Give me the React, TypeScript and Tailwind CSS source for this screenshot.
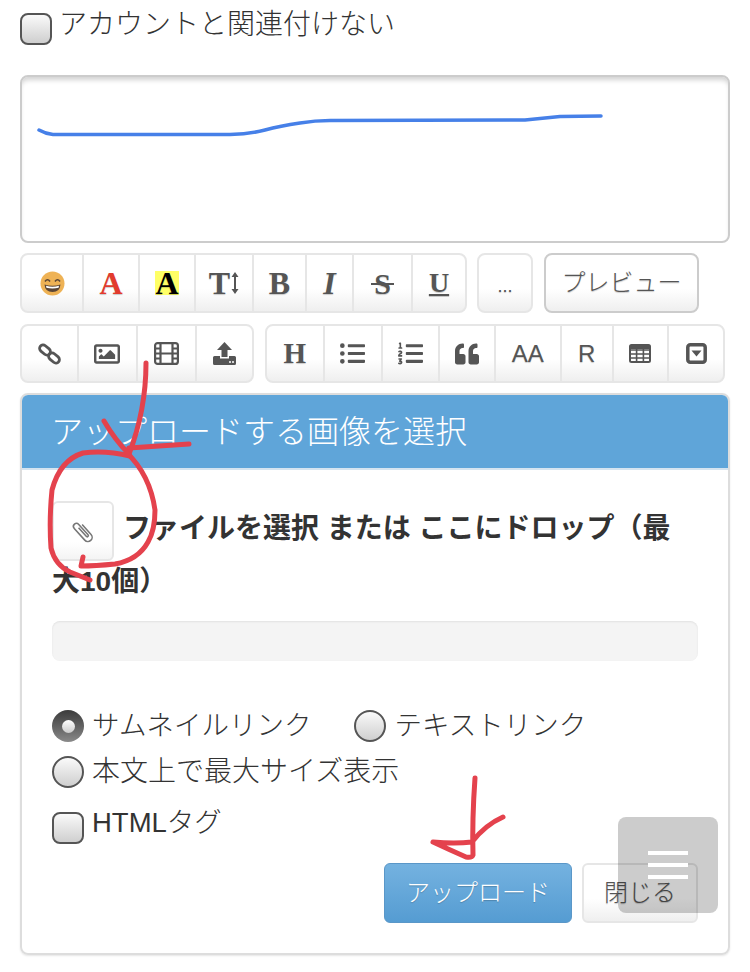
import { ReactNode } from "react"
import { FaListOl, FaListUl, FaQuoteLeft, FaRegImage } from "react-icons/fa"

const jp = "font-['Liberation_Sans','Noto_Sans_CJK_JP',sans-serif]"
const serif = "font-['Liberation_Serif','Noto_Serif',serif] font-bold"

const ToolButton = ({ className, children }: { className: string, children: ReactNode }) => (
    <div className={`flex h-full items-center justify-center border-r-2 border-[#e6e6e6] last:border-r-0 text-[#555] [text-shadow:0_1px_1px_rgba(0,0,0,0.2)] ${className}`}>
        {children}
    </div>
)

const ToolGroup = ({ className, children }: { className: string, children: ReactNode }) => (
    <div className={`flex rounded-lg border-2 border-[#e6e6e6] bg-gradient-to-b from-white from-60% to-[#efefef] ${className}`}>
        {children}
    </div>
)

const CheckBox = () => (
    <span className="block h-[32px] w-[32px] shrink-0 rounded-lg border-2 border-[#555] bg-gradient-to-b from-[#fafafa] to-[#cfcfcf]" />
)

const Radio = ({ checked }: { checked?: boolean }) => (
    checked
        ? <span className="flex h-[32px] w-[32px] shrink-0 items-center justify-center rounded-full bg-gradient-to-b from-[#3c3c3c] to-[#8a8a8a]">
            <span className="block h-[13px] w-[13px] rounded-full bg-gradient-to-b from-white to-[#ccc]" />
        </span>
        : <span className="block h-[32px] w-[32px] shrink-0 rounded-full border-2 border-[#555] bg-gradient-to-b from-[#fafafa] to-[#cfcfcf]" />
)

const Emoji = () => (
    <svg width="25" height="25" viewBox="0 0 25 25">
        <circle cx="12.5" cy="12.5" r="12" fill="#eeb255" />
        <path d="M5 10.5q2.5-3.5 5 0M15 10.5q2.500-3.500 5 0" fill="none" stroke="#5b4636" strokeWidth="1.6" />
        <path d="M4.500 13.500q8 2.500 16 0q-.5 7.500-8 7.500t-8-7.500z" fill="#5b4636" />
        <path d="M6 14.800q6.500 1.800 13 0l-.4 2q-6.100 1.500-12.200 0z" fill="#fff" />
    </svg>
)

const LinkIcon = () => (
    <svg width="23" height="22" viewBox="0 0 23 22" fill="none" stroke="#555" strokeWidth="2.800">
        <rect x="1" y="3.500" width="12" height="7" rx="3.500" transform="rotate(40 7 7)" />
        <rect x="10" y="11.500" width="12" height="7" rx="3.500" transform="rotate(40 16 15)" />
    </svg>
)

const FilmIcon = () => (
    <svg width="25" height="23" viewBox="0 0 25 23" fill="none" stroke="#555" strokeWidth="2.200">
        <rect x="1.100" y="1.100" width="22.800" height="20.800" rx="2.500" />
        <path d="M6.500 1v21M18.500 1v21M6.500 11.500h12M1 6.500h5.500M1 11.500h5.500M1 16.500h5.500M18.500 6.500h5.500M18.500 11.500h5.500M18.500 16.500h5.500" />
    </svg>
)

const UploadIcon = () => (
    <svg width="23" height="23" viewBox="0 0 23 23" fill="#555">
        <path d="M11.500 0l7.500 8h-4.500v7h-6v-7h-4.500z" />
        <path d="M1.500 14h5.500v2.500h9v-2.500h5.500a1.500 1.500 0 0 1 1.500 1.500v6a1.500 1.500 0 0 1-1.500 1.500h-20a1.500 1.500 0 0 1-1.500-1.500v-6a1.500 1.500 0 0 1 1.500-1.500z" />
        <circle cx="17" cy="20" r="1" fill="#fff" />
        <circle cx="20" cy="20" r="1" fill="#fff" />
    </svg>
)

const TableIcon = () => (
    <svg width="22" height="19" viewBox="0 0 22 19" fill="none" stroke="#555" strokeWidth="1.600">
        <rect x="1" y="1" width="20" height="17" rx="1.500" strokeWidth="2" />
        <path d="M1 6h20M1 10h20M1 14h20M7.600 5v13M14.400 5v13" />
        <path d="M1 3.500h20" strokeWidth="3" />
    </svg>
)

const SquareDown = () => (
    <svg width="21" height="21" viewBox="0 0 21 21">
        <rect x="1.800" y="1.800" width="17.400" height="17.400" rx="2.500" fill="none" stroke="#555" strokeWidth="3.500" />
        <path d="M5.500 7.500h10l-5 6z" fill="#555" />
    </svg>
)

const ClipIcon = () => (
    <svg width="27" height="29" viewBox="0 0 22 24" fill="none" stroke="#777" strokeWidth="1.300">
        <path transform="rotate(-42 11 12)" d="M14 7v11a3.500 3.500 0 0 1-7 0V5a2.500 2.500 0 0 1 5 0v11.500a1 1 0 0 1-2 0V7" />
    </svg>
)

const App = () => {
    return (
        <div className={`relative h-[972px] w-[750px] overflow-hidden bg-white text-[#333] ${jp}`}>
            <div className="px-[20px] pt-[13px]">
                <label className="flex h-[32px] items-start gap-[7px]">
                    <CheckBox />
                    <span className="-mt-[2px] text-[28px] font-light leading-[28px]">アカウントと関連付けない</span>
                </label>

                <div className="mt-[30px] h-[168px] w-[710px] rounded-lg border-2 border-[#ccc] shadow-[inset_0_5px_5px_-2px_rgba(0,0,0,0.18)]" />

                {/* ============== toolbar ============== */}
                <div className="mt-[10px] flex h-[60px] items-stretch">
                    <ToolGroup className="w-[447px]">
                        <ToolButton className="w-[62px]"><Emoji /></ToolButton>
                        <ToolButton className={`w-[56px] text-[32px] !text-[#e23b2e] ${serif}`}>A</ToolButton>
                        <ToolButton className="w-[56px]"><span className={`bg-[#ffff66] text-[32px] leading-[24px] !text-black ${serif}`}>A</span></ToolButton>
                        <ToolButton className={`w-[58px] text-[32px] ${serif}`}>
                            T
                            <svg width="8" height="22" viewBox="0 0 8 22" fill="#555" className="ml-[1px]">
                                <path d="M4 0l3.500 5h-2.500v12h2.500l-3.500 5-3.500-5h2.500v-12h-2.500z" />
                            </svg>
                        </ToolButton>
                        <ToolButton className={`w-[53px] text-[32px] ${serif}`}>B</ToolButton>
                        <ToolButton className={`w-[47px] text-[32px] italic ${serif}`}>I</ToolButton>
                        <ToolButton className={`w-[59px] text-[30px] ${serif}`}>
                            <span className="relative">
                                S
                                <span className="absolute -left-[3px] -right-[3px] top-1/2 h-[2px] bg-[#555]" />
                            </span>
                        </ToolButton>
                        <ToolButton className={`w-[52px] text-[28px] underline ${serif}`}>U</ToolButton>
                    </ToolGroup>
                    <ToolGroup className="ml-[10px] w-[56px]">
                        <ToolButton className="w-full pt-[6px] text-[18px]">...</ToolButton>
                    </ToolGroup>
                    <div className="ml-[11px] flex w-[155px] items-center justify-center rounded-lg border-2 border-[#ccc] bg-gradient-to-b from-white from-60% to-[#efefef] text-[24px] font-light text-[#555] [text-shadow:0_1px_1px_rgba(0,0,0,0.2)]">
                        プレビュー
                    </div>
                </div>

                <div className="mt-[11px] flex h-[59px] items-stretch">
                    <ToolGroup className="w-[234px]">
                        <ToolButton className="w-[57px]"><LinkIcon /></ToolButton>
                        <ToolButton className="w-[60px]"><FaRegImage size={26} /></ToolButton>
                        <ToolButton className="w-[60px]"><FilmIcon /></ToolButton>
                        <ToolButton className="w-[55px]"><UploadIcon /></ToolButton>
                    </ToolGroup>
                    <ToolGroup className="ml-[11px] w-[460px]">
                        <ToolButton className={`w-[58px] text-[29px] ${serif}`}>H</ToolButton>
                        <ToolButton className="w-[58px]"><FaListUl size={25} /></ToolButton>
                        <ToolButton className="w-[58px]"><FaListOl size={25} /></ToolButton>
                        <ToolButton className="w-[56px]"><FaQuoteLeft size={24} /></ToolButton>
                        <ToolButton className="w-[66px] text-[24px]">AA</ToolButton>
                        <ToolButton className="w-[52px] text-[24px]">R</ToolButton>
                        <ToolButton className="w-[56px]"><TableIcon /></ToolButton>
                        <ToolButton className="w-[54px]"><SquareDown /></ToolButton>
                    </ToolGroup>
                </div>

                {/* ============== upload panel ============== */}
                <div className="mt-[10px] h-[562px] w-[710px] overflow-hidden rounded-lg border-2 border-[#ddd] shadow-[0_1px_2px_rgba(0,0,0,0.1)]">
                    <div className="flex h-[75px] items-center border-b-2 border-[#d5e4f0] bg-[#5fa5d9] pl-[29px] text-[32px] font-light text-white">
                        アップロードする画像を選択
                    </div>
                    <div className="px-[30px] pt-[31px]">
                        <div className="text-[28px] font-bold leading-[42px]">
                            <span className="mr-[9px] inline-flex h-[60px] w-[62px] items-center justify-center rounded-md border-2 border-[#e6e6e6] bg-gradient-to-b from-white from-70% to-[#f4f4f4] align-middle">
                                <ClipIcon />
                            </span>
                            ファイルを選択 または ここにドロップ（最<br />大10個）
                        </div>
                        <div className="mt-[18px] h-[40px] w-[646px] rounded-lg bg-[#f4f4f4] shadow-[inset_0_1px_2px_rgba(0,0,0,0.08)]" />

                        <div className="mt-[49px] flex h-[32px] items-center text-[27.500px] font-light">
                            <Radio checked />
                            <span className="ml-[8px]">サムネイルリンク</span>
                            <span className="ml-[43px]"><Radio /></span>
                            <span className="ml-[8px]">テキストリンク</span>
                        </div>
                        <div className="mt-[14px] flex h-[32px] items-center text-[28px] font-light">
                            <Radio />
                            <span className="ml-[8px]">本文上で最大サイズ表示</span>
                        </div>
                        <div className="mt-[24px] flex h-[32px] items-start gap-[8px] text-[27.500px] font-light">
                            <CheckBox />
                            <span className="-mt-[5px] leading-[32px]">HTMLタグ</span>
                        </div>

                        <div className="mt-[19px] flex justify-end gap-[10px]">
                            <div className="flex h-[60px] w-[188px] items-center justify-center rounded-md border border-[#5a97c8] bg-gradient-to-b from-[#74b2e0] to-[#559cd2] text-[24px] font-light text-white [text-shadow:0_1px_1px_rgba(0,0,0,0.2)]">
                                アップロード
                            </div>
                            <div className="flex h-[60px] w-[116px] items-center justify-center rounded-md border-2 border-[#e6e6e6] bg-gradient-to-b from-white from-60% to-[#efefef] text-[24px] font-light text-[#555] [text-shadow:0_1px_1px_rgba(0,0,0,0.2)]">
                                閉じる
                            </div>
                        </div>
                    </div>
                </div>
            </div>

            {/* floating menu */}
            <div className="absolute left-[618px] top-[817px] flex h-[96px] w-[100px] flex-col items-center gap-[8px] rounded-lg bg-black/20 pt-[34px]">
                <span className="block h-[4px] w-[40px] bg-white" />
                <span className="block h-[4px] w-[40px] bg-white" />
                <span className="block h-[4px] w-[40px] bg-white" />
            </div>

            {/* hand drawn marks on the screenshot */}
            <svg className="pointer-events-none absolute left-0 top-0" width="750" height="972" viewBox="0 0 750 972" fill="none" strokeLinecap="round" strokeLinejoin="round">
                <path d="M39 130Q46 134 53 134.500L230 134.500Q250 134 265 130T300 123Q315 120.500 330 120.500L525 120Q545 118 560 116.500L601 116" stroke="#4680e8" strokeWidth="3.500" />
                <g stroke="#e4424d" strokeWidth="5">
                    <path d="M146 363Q146 410 129 454Q115 440 104 421M129 448Q160 446 189 444" />
                    <path d="M130 456Q105 450 83 453Q60 460 52 490Q49 520 51 548Q55 565 70 572L90 580" />
                    <path d="M127 453Q150 475 155 510Q155 530 148 542Q138 560 115 564Q95 566 81 566L83 557" />
                    <path d="M475 778Q472 820 473 855Q472 858 466 857Q450 850 433 842Q455 844 472 842Q485 825 503 817" />
                </g>
            </svg>
        </div>
    )
}

export default App
